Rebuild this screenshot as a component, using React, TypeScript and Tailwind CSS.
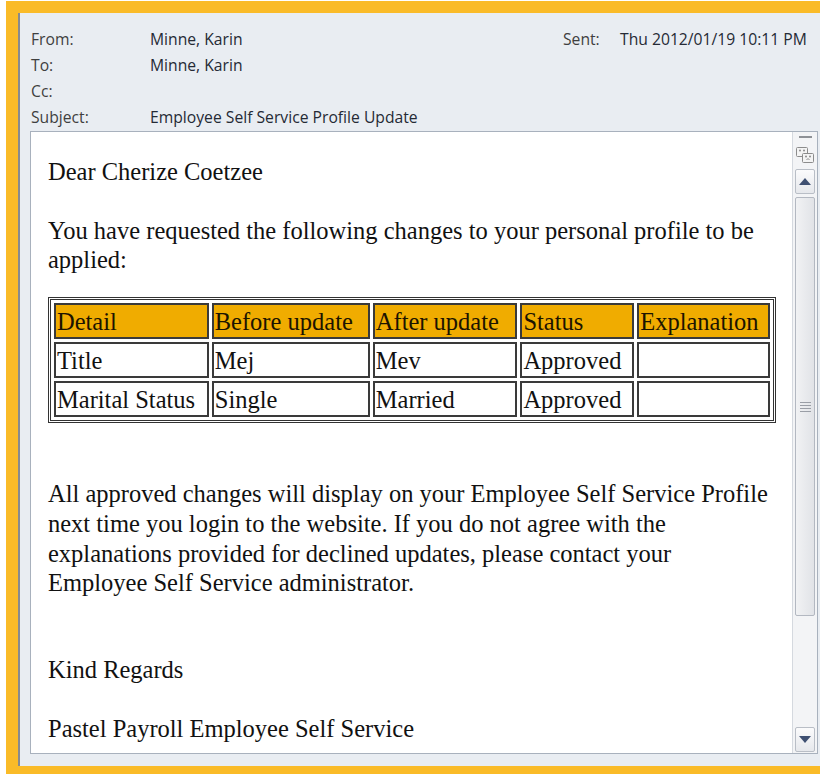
import React from "react";

const headerFont = { fontFamily: '"Open Sans", "Noto Sans", sans-serif' };
const bodyFont = { fontFamily: '"Liberation Serif", "Times New Roman", serif' };

type Row = [string, string, string, string, string];

const rows: Row[] = [
  ["Title", "Mej", "Mev", "Approved", ""],
  ["Marital Status", "Single", "Married", "Approved", ""],
];

const colWidths = ["w-[155px]", "w-[160px]", "w-[146px]", "w-[114px]", "w-[133px]"];

function HeaderRow({ label, value, right }: { label: string; value: string; right?: React.ReactNode }) {
  return (
    <div className="flex h-[26px] items-center">
      <div className="w-[119px] text-[#3f3f3f]">{label}</div>
      <div className="text-[#252a35]">{value}</div>
      {right}
    </div>
  );
}

function PeoplePaneIcon() {
  return (
    <svg width="18" height="16" viewBox="0 0 18 16">
      <rect x="0.5" y="0.5" width="11" height="9" rx="1" fill="#f4f4f4" stroke="#8c8c8c" />
      <circle cx="4" cy="3.5" r="1" fill="#8c8c8c" />
      <circle cx="8" cy="3.5" r="1" fill="#8c8c8c" />
      <rect x="6.5" y="6.5" width="11" height="9" rx="1" fill="#f4f4f4" stroke="#8c8c8c" />
      <circle cx="10" cy="9.5" r="1" fill="#8c8c8c" />
      <circle cx="14" cy="9.5" r="1" fill="#8c8c8c" />
      <path d="M10.5 13 L12 11.5 L13.5 13" stroke="#8c8c8c" fill="none" />
    </svg>
  );
}

function ScrollButton({ dir }: { dir: "up" | "down" }) {
  return (
    <div className="mx-[2px] h-[25px] rounded-[2px] border border-[#b9bec6] bg-gradient-to-b from-[#fbfbfc] to-[#e6e8ec] flex items-center justify-center">
      <svg width="12" height="7" viewBox="0 0 12 7">
        {dir === "up" ? (
          <path d="M0 7 L6 0 L12 7 Z" fill="#3f5072" />
        ) : (
          <path d="M0 0 L12 0 L6 7 Z" fill="#3f5072" />
        )}
      </svg>
    </div>
  );
}

function Scrollbar() {
  return (
    <div className="w-[25px] border-l border-[#d5d9df] bg-[#f3f4f6] flex flex-col">
      <div className="mt-[4px] mx-auto h-[2px] w-[13px] bg-[#8e9196]" />
      <div className="mt-[9px] flex justify-center">
        <PeoplePaneIcon />
      </div>
      <div className="mt-[6px]">
        <ScrollButton dir="up" />
      </div>
      <div className="mx-[2px] mt-[3px] h-[419px] rounded-[2px] border border-[#b3b8c1] bg-gradient-to-r from-[#f1f2f4] to-[#e1e3e7] flex items-center justify-center">
        <div className="flex flex-col gap-[2px]">
          <div className="h-px w-[11px] bg-[#9a9ea6]" />
          <div className="h-px w-[11px] bg-[#9a9ea6]" />
          <div className="h-px w-[11px] bg-[#9a9ea6]" />
          <div className="h-px w-[11px] bg-[#9a9ea6]" />
        </div>
      </div>
      <div className="flex-1" />
      <div className="mb-px">
        <ScrollButton dir="down" />
      </div>
    </div>
  );
}

function ChangesTable() {
  const head = ["Detail", "Before update", "After update", "Status", "Explanation"];
  return (
    <table className="border-separate border-spacing-[3px] border-[3px] border-double border-[#333] text-[#111]">
      <thead>
        <tr>
          {head.map((h, i) => (
            <th
              key={h}
              className={`${colWidths[i]} h-[36px] border-2 border-[#3a3a3a] bg-[#f0ac00] px-[1px] py-0 text-left font-normal leading-[29px] text-[#1c1400]`}
            >
              {h}
            </th>
          ))}
        </tr>
      </thead>
      <tbody>
        {rows.map((r) => (
          <tr key={r[0]}>
            {r.map((c, i) => (
              <td
                key={i}
                className={`${colWidths[i]} h-[36px] border-2 border-[#3a3a3a] px-[1px] py-0 text-left leading-[29px] whitespace-nowrap`}
              >
                {c}
              </td>
            ))}
          </tr>
        ))}
      </tbody>
    </table>
  );
}

export default function App() {
  return (
    <div className="w-[820px] h-[774px] overflow-hidden bg-white pl-[6px] pt-px">
      <div className="h-full bg-[#fabb28] pl-[12px] pt-[12px] pb-[8px]">
        <div className="flex h-full flex-col border-l-2 border-[#878a8f] bg-[#e9edf2]">
          <div className="pl-[11px] pt-[14px] text-[15.7px]" style={headerFont}>
            <HeaderRow
              label="From:"
              value="Minne, Karin"
              right={
                <div className="ml-auto flex w-[257px]">
                  <div className="w-[57px] text-[#3f3f3f]">Sent:</div>
                  <div className="text-[#252a35]">Thu 2012/01/19 10:11 PM</div>
                </div>
              }
            />
            <HeaderRow label="To:" value="Minne, Karin" />
            <HeaderRow label="Cc:" value="" />
            <HeaderRow label="Subject:" value="Employee Self Service Profile Update" />
          </div>
          <div className="mb-[12px] ml-[10px] mr-[2px] flex flex-1 min-h-0 border border-[#a8b1bd] bg-white">
            <div
              className="flex-1 overflow-hidden pl-[17px] pr-[16px] pt-[25px] text-[24.5px] leading-[29.7px] text-[#111]"
              style={bodyFont}
            >
              <p>Dear Cherize Coetzee</p>
              <p className="mt-[29px]">
                You have requested the following changes to your personal profile to be applied:
              </p>
              <div className="mt-[22px]">
                <ChangesTable />
              </div>
              <p className="mt-[56px]">
                All approved changes will display on your Employee Self Service Profile next time you login to the
                website. If you do not agree with the explanations provided for declined updates, please contact your
                Employee Self Service administrator.
              </p>
              <p className="mt-[57px]">Kind Regards</p>
              <p className="mt-[29px]">Pastel Payroll Employee Self Service</p>
            </div>
            <Scrollbar />
          </div>
        </div>
      </div>
    </div>
  );
}
